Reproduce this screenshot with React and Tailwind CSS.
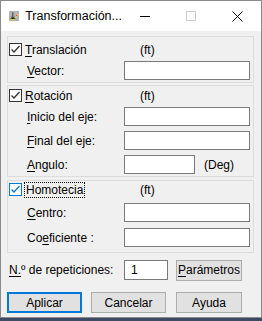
import React from 'react';

const font = { fontFamily: '"Liberation Sans", Arial, sans-serif' };

function Check({ focused })
{
    const c = focused ? '#0078d7' : '#333333';
    return (
        <span className={`w-[13px] h-[13px] border bg-white flex items-center justify-center shrink-0 ${focused ? 'border-[#0078d7]' : 'border-[#333333]'}`}>
            <svg width="11" height="11" viewBox="0 0 11 11">
                <path d="M1.5 5.5 L4 8 L9.5 2" fill="none" stroke={c} strokeWidth="1.3" />
            </svg>
        </span>
    );
}

function U({ children })
{
    return <span className="underline underline-offset-2">{children}</span>;
}

function Field({ label, w = 'w-[126px]', after })
{
    return (
        <div className="flex items-center h-[19px]">
            <span className="w-[115px] pl-[18px] text-black shrink-0">{label}</span>
            <div className={`${w} h-[19px] bg-white border border-[#7a7a7a] shrink-0`} />
            {after && <span className="ml-[9px]">{after}</span>}
        </div>
    );
}

function Btn({ children, w = 'w-[75px]', def })
{
    return (
        <button className={`${w} h-[21px] bg-[#e1e1e1] flex items-center justify-center text-black ${def ? 'border-2 border-[#0078d7]' : 'border border-[#adadad]'}`}>
            {children}
        </button>
    );
}

export default function App()
{
    return (
        <div className="w-[262px] h-[321px] bg-[#3d4966] text-[12px] leading-none" style={font}>
            <div className="w-[262px] h-[318px] bg-[#f0f0f0] border border-[#8a8a8a] flex flex-col">
                {/* title bar */}
                <div className="h-[30px] bg-white flex items-center shrink-0">
                    <svg className="ml-[8px]" width="16" height="16" viewBox="0 0 16 16">
                        <rect width="16" height="16" fill="#b4b4b4" />
                        <path d="M2 13 C5 15, 9 14, 11 9 C12 6, 14 5, 15 6" fill="none" stroke="#f5e400" strokeWidth="1.4" />
                        <path d="M6 2 L6 12 M3.5 9 L6 12 L8.5 9 M2 12 L10 12" fill="none" stroke="#000" strokeWidth="1" />
                        <circle cx="12" cy="7" r="1" fill="#e03030" />
                    </svg>
                    <span className="ml-[6px] text-[12.5px] text-black">Transformación...</span>
                    <div className="ml-auto flex items-center">
                        <span className="w-[46px] flex justify-center">
                            <span className="w-[10px] h-px bg-black" />
                        </span>
                        <span className="w-[46px] flex justify-center">
                            <span className="w-[10px] h-[10px] border border-[#cccccc]" />
                        </span>
                        <span className="w-[46px] flex justify-center mr-[1px]">
                            <svg width="11" height="11" viewBox="0 0 11 11">
                                <path d="M0.5 0.5 L10.5 10.5 M10.5 0.5 L0.5 10.5" stroke="#000" strokeWidth="1" />
                            </svg>
                        </span>
                    </div>
                </div>

                <div className="pl-[6px] pt-[5px] flex flex-col">
                    {/* Translacion */}
                    <div className="w-[247px] h-[47px] border border-[#dcdcdc] pl-px pt-[6px] flex flex-col">
                        <div className="flex items-center h-[13px]">
                            <Check />
                            <span className="ml-[3px] w-[115px]"><U>T</U>ranslación</span>
                            <span>(ft)</span>
                        </div>
                        <div className="mt-[5px]">
                            <Field label={<><U>V</U>ector:</>} />
                        </div>
                    </div>

                    {/* Rotacion */}
                    <div className="mt-[2px] w-[247px] h-[92px] border border-[#dcdcdc] pl-px pt-[3px] flex flex-col">
                        <div className="flex items-center h-[13px]">
                            <Check />
                            <span className="ml-[3px] w-[115px]"><U>R</U>otación</span>
                            <span>(ft)</span>
                        </div>
                        <div className="mt-[5px] flex flex-col gap-[5px]">
                            <Field label={<><U>I</U>nicio del eje:</>} />
                            <Field label={<><U>F</U>inal del eje:</>} />
                            <Field label={<><U>A</U>ngulo:</>} w="w-[71px]" after="(Deg)" />
                        </div>
                    </div>

                    {/* Homotecia */}
                    <div className="mt-[3px] w-[247px] h-[73px] border border-[#dcdcdc] pl-px pt-[2px] flex flex-col">
                        <div className="flex items-center h-[13px]">
                            <Check focused />
                            <span className="ml-[3px] w-[115px]">
                                <span className="outline outline-1 outline-dotted outline-black px-px">Homotecia</span>
                            </span>
                            <span>(ft)</span>
                        </div>
                        <div className="mt-[7px] flex flex-col gap-[6px]">
                            <Field label={<><U>C</U>entro:</>} />
                            <Field label={<>Co<U>e</U>ficiente :</>} />
                        </div>
                    </div>

                    {/* repeticiones */}
                    <div className="mt-[6px] flex items-center h-[22px]">
                        <span className="w-[117px] pl-[2px]"><U>N.</U>º de repeticiones:</span>
                        <div className="w-[44px] h-[20px] bg-white border border-[#7a7a7a] flex items-center pl-[6px]">1</div>
                        <div className="ml-[8px]">
                            <Btn w="w-[66px]"><U>P</U>arámetros</Btn>
                        </div>
                    </div>

                    {/* buttons */}
                    <div className="mt-[11px] flex items-center">
                        <Btn def>Aplicar</Btn>
                        <div className="ml-[9px]"><Btn>Cancelar</Btn></div>
                        <div className="ml-[10px]"><Btn w="w-[66px]">Ayuda</Btn></div>
                    </div>
                </div>
            </div>
        </div>
    );
}
